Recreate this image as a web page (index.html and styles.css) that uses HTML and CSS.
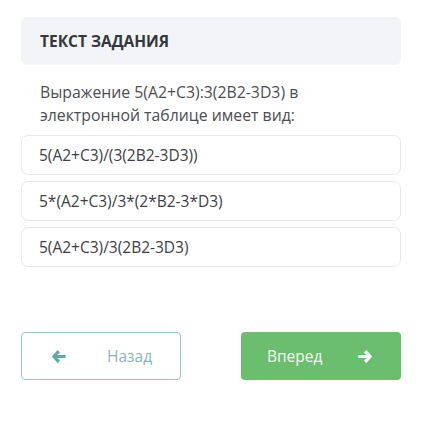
FILE: index.html
```html
<!DOCTYPE html>
<html lang="ru">
<head>
<meta charset="utf-8">
<link rel="stylesheet" href="styles.css">
</head>
<body>
<div class="page">
  <div class="task-header">ТЕКСТ ЗАДАНИЯ</div>
  <p class="question">Выражение 5(A2+C3):3(2B2-3D3) в электронной таблице имеет вид:</p>
  <div class="options">
    <div class="option">5(A2+C3)/(3(2B2-3D3))</div>
    <div class="option">5*(A2+C3)/3*(2*B2-3*D3)</div>
    <div class="option">5(A2+C3)/3(2B2-3D3)</div>
  </div>
  <div class="nav">
    <button class="btn btn-back">
      <svg class="arrow" width="14" height="13" viewBox="0 0 14 13"><path d="M6.2 0.6 L7.6 2 C7.9 2.3 7.9 2.8 7.6 3.1 L5.1 5.1 H12.9 C13.4 5.1 13.8 5.5 13.8 6 V7 C13.8 7.5 13.4 7.9 12.9 7.9 H5.1 L7.6 9.9 C7.9 10.2 7.9 10.7 7.6 11 L6.2 12.4 C5.9 12.7 5.4 12.7 5.1 12.4 L0.3 7.1 C0 6.8 0 6.2 0.3 5.9 L5.1 0.6 C5.4 0.3 5.9 0.3 6.2 0.6 Z" fill="#5fa8ad"/></svg>
      <span>Назад</span>
    </button>
    <button class="btn btn-next">
      <span>Вперед</span>
      <svg class="arrow" width="14" height="13" viewBox="0 0 14 13"><path d="M7.8 0.6 L6.4 2 C6.1 2.3 6.1 2.8 6.4 3.1 L8.9 5.1 H1.1 C0.6 5.1 0.2 5.5 0.2 6 V7 C0.2 7.5 0.6 7.9 1.1 7.9 H8.9 L6.4 9.9 C6.1 10.2 6.1 10.7 6.4 11 L7.8 12.4 C8.1 12.7 8.6 12.7 8.9 12.4 L13.7 7.1 C14 6.8 14 6.2 13.7 5.9 L8.9 0.6 C8.6 0.3 8.1 0.3 7.8 0.6 Z" fill="#ffffff"/></svg>
    </button>
  </div>
</div>
</body>
</html>
```
FILE: styles.css
```css
* { box-sizing: border-box; }
html, body { margin: 0; padding: 0; background: #fff; }
body { font-family: "Open Sans", "Noto Sans", sans-serif; }
.page { padding: 17px 21px; width: 422px; }
.task-header {
  height: 48px;
  background: #f2f4f7;
  border-radius: 6px;
  padding-left: 19px;
  display: flex;
  align-items: center;
  font-weight: 700;
  font-size: 15.5px;
  color: #34373c;
}
.question {
  margin: 16px 0 8px;
  padding: 0 19px;
  font-size: 15.8px;
  line-height: 23px;
  color: #4b4e53;
}
.options { display: flex; flex-direction: column; gap: 6px; }
.option {
  height: 40px;
  border: 1px solid #e7e9ec;
  border-radius: 7px;
  padding-left: 17px;
  display: flex;
  align-items: center;
  font-size: 15.5px;
  color: #3d4045;
}
.nav {
  margin-top: 65px;
  display: flex;
  justify-content: space-between;
}
.btn {
  width: 160px;
  height: 48px;
  border-radius: 4px;
  font-family: inherit;
  font-size: 15.5px;
  display: flex;
  align-items: center;
  padding: 0;
  cursor: pointer;
}
.btn-back {
  background: #fff;
  border: 1.5px solid #93c5c8;
  color: #8db6bb;
  padding-left: 30px;
  gap: 41px;
}
.btn-next {
  background: #6cbe6f;
  border: none;
  color: #f4fbf4;
  padding-left: 26px;
  gap: 36px;
}
.arrow { display: block; }
```
